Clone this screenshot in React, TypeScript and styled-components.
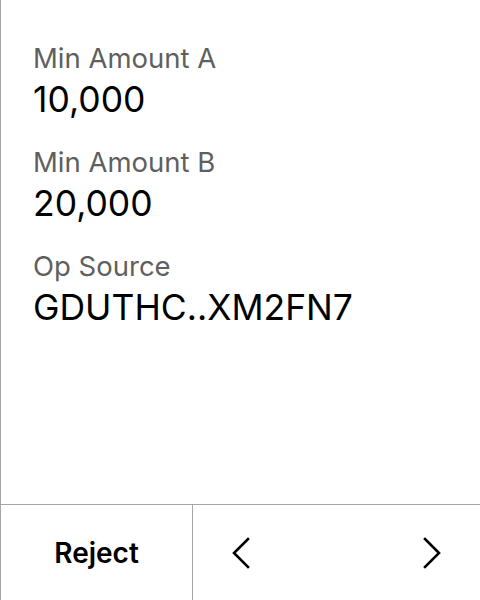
import React from "react";
import styled, { createGlobalStyle } from "styled-components";

const Global = createGlobalStyle`
  html, body { margin: 0; padding: 0; background: #fff; }
  body { font-family: Inter, "Noto Sans", sans-serif; }
`;

const Screen = styled.div`
  width: 480px;
  height: 600px;
  box-sizing: border-box;
  border-left: 1px solid #a6a6a6;
  display: flex;
  flex-direction: column;
  background: #fff;
`;

const Content = styled.div`
  flex: 1;
  padding: 40px 0 0 32px;
  display: flex;
  flex-direction: column;
  gap: 20px;
`;

const Field = styled.div`
  display: flex;
  flex-direction: column;
`;

const Label = styled.div`
  font-size: 27.5px;
  line-height: 36px;
  color: #5f5f5f;
`;

const Value = styled.div`
  font-size: 35.5px;
  line-height: 48px;
  color: #000;
`;

const Footer = styled.div`
  height: 96px;
  box-sizing: border-box;
  border-top: 1px solid #a6a6a6;
  display: flex;
`;

const RejectButton = styled.div`
  width: 191px;
  border-right: 1px solid #a6a6a6;
  display: flex;
  align-items: center;
  justify-content: center;
  font-size: 28px;
  font-weight: 600;
  color: #000;
`;

const Nav = styled.div`
  flex: 1;
  display: flex;
  justify-content: space-between;
`;

const NavButton = styled.div`
  width: 96px;
  display: flex;
  align-items: center;
  justify-content: center;
`;

const Chevron = ({ dir }: { dir: "left" | "right" }) => (
  <svg width="20" height="32" viewBox="0 0 20 32" fill="none">
    <path
      d={dir === "left" ? "M17 2 L3 16 L17 30" : "M3 2 L17 16 L3 30"}
      stroke="#000"
      strokeWidth="2.6"
      strokeLinecap="square"
      strokeLinejoin="miter"
    />
  </svg>
);

const fields = [
  { label: "Min Amount A", value: "10,000" },
  { label: "Min Amount B", value: "20,000" },
  { label: "Op Source", value: "GDUTHC..XM2FN7" },
];

export default function App() {
  return (
    <>
      <Global />
      <Screen>
        <Content>
          {fields.map((f) => (
            <Field key={f.label}>
              <Label>{f.label}</Label>
              <Value>{f.value}</Value>
            </Field>
          ))}
        </Content>
        <Footer>
          <RejectButton>Reject</RejectButton>
          <Nav>
            <NavButton>
              <Chevron dir="left" />
            </NavButton>
            <NavButton>
              <Chevron dir="right" />
            </NavButton>
          </Nav>
        </Footer>
      </Screen>
    </>
  );
}
